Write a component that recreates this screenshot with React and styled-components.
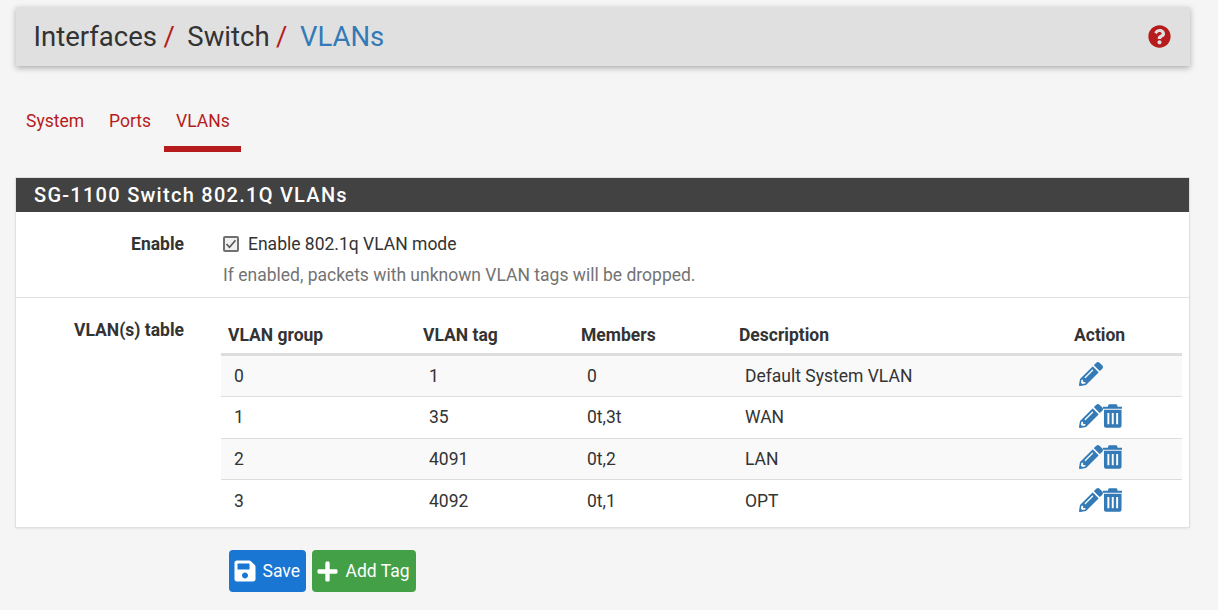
import styled, { createGlobalStyle } from "styled-components";
import { FaQuestionCircle, FaSave, FaPlus, FaPencilAlt } from "react-icons/fa";

const vlans = [
  { group: "0", tag: "1", members: "0", description: "Default System VLAN", removable: false },
  { group: "1", tag: "35", members: "0t,3t", description: "WAN", removable: true },
  { group: "2", tag: "4091", members: "0t,2", description: "LAN", removable: true },
  { group: "3", tag: "4092", members: "0t,1", description: "OPT", removable: true },
];

function TrashIcon() {
  return (
    <TrashSvg viewBox="0 0 20 24" aria-hidden="true">
      <path
        fill="#337ab7"
        d="M6.5 0h7a1 1 0 0 1 1 .8L15 2.5h5V4.5H0V2.5h5l.5-1.7a1 1 0 0 1 1-.8zM1 5.5h18V22a2 2 0 0 1-2 2H3a2 2 0 0 1-2-2V5.5zm3.5 3.5v11.5h2V9h-2zm4.5 0v11.5h2V9H9zm4.5 0v11.5h2V9h-2z"
      />
    </TrashSvg>
  );
}

function App() {
  return (
    <Page>
      <GlobalStyle />
      <Header>
        <Crumbs>
          <Crumb>Interfaces</Crumb>
          <Slash>/</Slash>
          <Crumb>Switch</Crumb>
          <Slash>/</Slash>
          <CurrentCrumb>VLANs</CurrentCrumb>
        </Crumbs>
        <HelpIcon />
      </Header>

      <Tabs>
        <Tab>System</Tab>
        <Tab>Ports</Tab>
        <Tab $active>VLANs</Tab>
      </Tabs>

      <Panel>
        <PanelHeading>SG-1100 Switch 802.1Q VLANs</PanelHeading>
        <EnableRow>
          <RowLabel>Enable</RowLabel>
          <RowBody>
            <CheckLine>
              <CheckBox viewBox="0 0 16 16" aria-hidden="true">
                <rect x="1" y="1" width="14" height="14" rx="1" fill="#f0f0f0" stroke="#707070" strokeWidth="2" />
                <path d="M3.5 8l3 3.2 6-7" fill="none" stroke="#555" strokeWidth="1.6" />
              </CheckBox>
              Enable 802.1q VLAN mode
            </CheckLine>
            <HelpText>If enabled, packets with unknown VLAN tags will be dropped.</HelpText>
          </RowBody>
        </EnableRow>
        <TableRow>
          <RowLabel>VLAN(s) table</RowLabel>
          <TableBody>
            <Table>
              <colgroup>
                <col width="195" />
                <col width="158" />
                <col width="158" />
                <col width="335" />
                <col />
              </colgroup>
              <thead>
                <tr>
                  <Th>VLAN group</Th>
                  <Th>VLAN tag</Th>
                  <Th>Members</Th>
                  <Th>Description</Th>
                  <Th>Action</Th>
                </tr>
              </thead>
              <tbody>
                {vlans.map((vlan) => (
                  <Tr key={vlan.group}>
                    <GroupCell>{vlan.group}</GroupCell>
                    <Td>{vlan.tag}</Td>
                    <Td>{vlan.members}</Td>
                    <Td>{vlan.description}</Td>
                    <ActionCell>
                      <Actions>
                        <PencilIcon />
                        {vlan.removable && <TrashIcon />}
                      </Actions>
                    </ActionCell>
                  </Tr>
                ))}
              </tbody>
            </Table>
          </TableBody>
        </TableRow>
      </Panel>

      <Buttons>
        <Button $color="#1976d2" $width="77px">
          <SaveIcon size={24} />
          Save
        </Button>
        <Button $color="#43a047" $width="104px">
          <FaPlus size={23} />
          Add Tag
        </Button>
      </Buttons>
    </Page>
  );
}

const GlobalStyle = createGlobalStyle`
  html, body {
    margin: 0;
    background: #f5f5f5;
  }
  body {
    font-family: Roboto, "Liberation Sans", sans-serif;
    font-size: 17.5px;
    color: #333;
  }
`;

const Page = styled.div`
  width: 1218px;
  height: 610px;
  box-sizing: border-box;
  padding: 7px 28px 0 16px;
  overflow: hidden;
`;

const Header = styled.header`
  height: 59px;
  box-sizing: border-box;
  padding: 0 19px 0 17.5px;
  display: flex;
  align-items: center;
  justify-content: space-between;
  background: #e0e0e0;
  box-shadow: 0 2px 6px rgba(0, 0, 0, 0.3);
`;

const Crumbs = styled.div`
  display: flex;
  align-items: center;
  font-size: 27.5px;
  line-height: 40px;
`;

const Crumb = styled.span`
  color: #333;
`;

const CurrentCrumb = styled.span`
  color: #337ab7;
`;

const Slash = styled.span`
  color: #b71c1c;
  margin: 0 12.5px 0 6.5px;
`;

const HelpIcon = styled(FaQuestionCircle)`
  width: 23px;
  height: 23px;
  color: #b71c1c;
`;

const Tabs = styled.nav`
  margin-top: 27px;
  display: flex;
  gap: 1px;
  height: 59px;
`;

const Tab = styled.a`
  box-sizing: border-box;
  height: 59px;
  padding: 17px ${(p) => (p.$active ? "11px" : "12px")} 0 12px;
  color: #b71c1c;
  font-size: 17.5px;
  line-height: 22px;
  border-bottom: 6px solid ${(p) => (p.$active ? "#b71c1c" : "transparent")};

  &:first-child {
    padding-left: 10px;
  }
`;

const Panel = styled.section`
  margin: 26px 1px 0 0;
  background: #fff;
  box-shadow: 0 0 0 1px #e0e0e0, 0 1px 3px rgba(0, 0, 0, 0.12);
`;

const PanelHeading = styled.h2`
  margin: 0;
  height: 34px;
  padding-left: 18px;
  background: #424242;
  color: #fff;
  font-size: 20px;
  font-weight: 500;
  line-height: 35px;
  letter-spacing: 1.27px;
`;

const EnableRow = styled.div`
  display: flex;
  height: 86px;
  box-sizing: border-box;
  padding-top: 21px;
  border-bottom: 1px solid #e0e0e0;
`;

const TableRow = styled.div`
  display: flex;
  height: 229px;
  box-sizing: border-box;
  padding-top: 21px;
`;

const RowLabel = styled.div`
  width: 168px;
  flex-shrink: 0;
  text-align: right;
  font-weight: 700;
  font-size: 17.5px;
  line-height: 22px;
  color: #333;
`;

const RowBody = styled.div`
  margin-left: 39px;
`;

const CheckLine = styled.div`
  display: flex;
  align-items: center;
  gap: 9px;
  height: 22px;
  color: #333;
`;

const CheckBox = styled.svg`
  width: 16px;
  height: 16px;
  flex-shrink: 0;
`;

const HelpText = styled.div`
  margin-top: 9px;
  line-height: 22px;
  color: #737373;
`;

const TableBody = styled.div`
  margin-left: 37px;
  width: 961px;
`;

const Table = styled.table`
  width: 100%;
  border-collapse: collapse;
  table-layout: fixed;
  margin-top: -3px;
`;

const Th = styled.th`
  height: 37px;
  padding: 0 7px;
  text-align: left;
  font-size: 17.5px;
  font-weight: 700;
  color: #333;
  border-bottom: 3px solid #ddd;
`;

const Tr = styled.tr`
  height: 41.8px;
  background: #fff;

  &:nth-child(odd) {
    background: #f9f9f9;
  }
`;

const Td = styled.td`
  padding: 0 13px;
  color: #333;
  border-bottom: 1px solid #ddd;
  line-height: 22px;

  ${Tr}:last-child & {
    border-bottom: 0;
  }
`;

const GroupCell = styled(Td)`
  padding-left: 13px;
`;

const ActionCell = styled(Td)`
  padding: 0 0 0 12px;
`;

const Actions = styled.div`
  display: flex;
  align-items: center;
  margin-top: -3px;
`;

const PencilIcon = styled(FaPencilAlt)`
  width: 24px;
  height: 24px;
  color: #337ab7;
`;

const TrashSvg = styled.svg`
  width: 19.5px;
  height: 24px;
  margin-left: -0.5px;
`;

const Buttons = styled.div`
  display: flex;
  gap: 6px;
  margin: 23px 0 0 213px;
`;

const SaveIcon = styled(FaSave)`
  margin-right: -1px;
`;

const Button = styled.button`
  display: flex;
  align-items: center;
  gap: 6.5px;
  width: ${(p) => p.$width};
  height: 42px;
  padding: 0 0 0 4px;
  border: 0;
  border-radius: 4px;
  background: ${(p) => p.$color};
  color: #fff;
  font-family: inherit;
  font-size: 17.5px;
`;

export default App;
